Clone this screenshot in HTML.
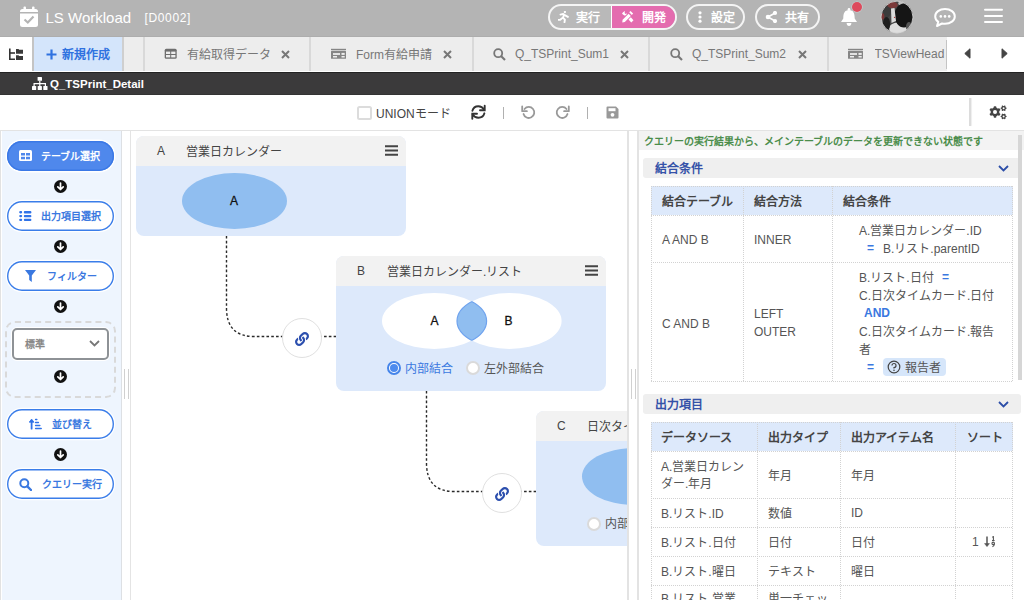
<!DOCTYPE html>
<html lang="zh-CN">
<head>
<meta charset="utf-8">
<style>
*{box-sizing:border-box;margin:0;padding:0}
html,body{width:1024px;height:600px;overflow:hidden;background:#fff;font-family:"Liberation Sans",sans-serif;color:#333}
.a{position:absolute}
.t{position:absolute;white-space:nowrap;line-height:1}
/* header */
#hdr{left:0;top:0;width:1024px;height:37px;background:#b4b4b4;box-shadow:inset 0 -1px 0 #adadad}
.pill{position:absolute;border:2px solid rgba(255,255,255,0.85);border-radius:14px;height:26px;top:4px}
/* tabs */
#tabs{left:0;top:37px;width:1024px;height:35px;background:#ededed;overflow:hidden;border-bottom:1px solid #fff}
.tab{position:absolute;top:0;height:35px;border-left:2px solid #d9d9d9}
.tabtxt{font-size:12px;color:#777}
#dark{left:0;top:72px;width:1024px;height:23px;background:#3b3a3b;border-top:1px solid #232323;border-bottom:1px solid #333}
#tool{left:0;top:95px;width:1024px;height:36px;background:#fff;border-bottom:1px solid #e3e3e3}
</style>
</head>
<body>
<!-- HEADER -->
<div id="hdr" class="a">
  <svg class="a" style="left:19px;top:6px" width="20" height="22" viewBox="0 0 20 22">
    <rect x="1" y="3" width="18" height="18" rx="2.5" fill="#fff"/>
    <rect x="4.5" y="0.5" width="2.5" height="5" rx="1" fill="#fff"/>
    <rect x="13" y="0.5" width="2.5" height="5" rx="1" fill="#fff"/>
    <rect x="1" y="6" width="18" height="1.5" fill="#b4b4b4"/>
    <path d="M5.5 13.5 L8.8 16.5 L14.5 10.5" stroke="#b4b4b4" stroke-width="2.2" fill="none"/>
  </svg>
  <div class="t" style="left:45.5px;top:9.5px;font-size:15px;color:#fff">LS Workload</div>
  <div class="t" style="left:144.5px;top:11.5px;font-size:12px;letter-spacing:0.65px;color:#fff">[D0002]</div>
  <!-- segmented -->
  <div class="a" style="left:548px;top:4px;width:129px;height:26px;border-radius:13px;overflow:hidden;border:2px solid rgba(255,255,255,0.85);background:#b9b9b9">
    <div class="a" style="left:60.5px;top:0;width:67px;height:24px;background:#e46caf;border-left:1px solid #fff"></div>
  </div>
  <svg class="a" style="left:558px;top:11px" width="11" height="12" viewBox="0 0 11 12">
    <circle cx="6.9" cy="1.1" r="1.15" fill="#fff"/>
    <path d="M2.5 3.6 L5.2 2.9 L5.9 3.4 L5.1 6.8 L6.9 8.6 L6.5 11.2 M6.8 4.2 L9.9 5.9 M4.7 6.8 L1.9 8.9 L0.6 8.9" stroke="#fff" stroke-width="1.9" fill="none" stroke-linecap="round" stroke-linejoin="round"/>
  </svg>
  <div class="t" style="left:576px;top:12px;font-size:12px;font-weight:bold;color:#fff">実行</div>
  <svg class="a" style="left:621px;top:10px" width="14" height="14" viewBox="0 0 14 14">
    <path d="M1.3 12.6 L1.6 9.8 L7.6 3.8 L9.8 6 L3.8 12 Z" fill="#fff"/>
    <path d="M8.2 2.3 L9.5 1 L12.1 3.6 L10.8 4.9 Z" fill="#fff"/>
    <path d="M2 2.3 L4 0.9 L3.6 3 L4.6 4 L6.1 3.2 L5 5.3 L3.3 5.6 L1 3.8 Z" fill="#fff"/>
    <path d="M7.5 9.6 L9.8 7.3 L12.5 10.2 L10.3 12.5 Z" fill="#fff"/>
  </svg>
  <div class="t" style="left:642px;top:12px;font-size:12px;font-weight:bold;color:#fff">開発</div>
  <div class="pill" style="left:686px;width:59px"></div>
  <svg class="a" style="left:698px;top:11px" width="4" height="12" viewBox="0 0 4 12"><circle cx="2" cy="1.8" r="1.6" fill="#fff"/><circle cx="2" cy="6" r="1.6" fill="#fff"/><circle cx="2" cy="10.2" r="1.6" fill="#fff"/></svg>
  <div class="t" style="left:711px;top:12px;font-size:12px;font-weight:bold;color:#fff">設定</div>
  <div class="pill" style="left:755px;width:65px"></div>
  <svg class="a" style="left:765px;top:11px" width="13" height="12" viewBox="0 0 13 12"><path d="M10 2 L3 6 L10 10" stroke="#fff" stroke-width="1.6" fill="none"/><circle cx="10" cy="2" r="2.1" fill="#fff"/><circle cx="3" cy="6" r="2.3" fill="#fff"/><circle cx="10" cy="10" r="2.1" fill="#fff"/></svg>
  <div class="t" style="left:785px;top:12px;font-size:12px;font-weight:bold;color:#fff">共有</div>
  <!-- bell -->
  <svg class="a" style="left:836px;top:0px" width="30" height="30" viewBox="836 0 30 30">
    <circle cx="849" cy="9.3" r="1.3" fill="#fff"/>
    <path d="M843.3 18.5 C843.3 13.5 844.5 10 849 10 C853.5 10 854.7 13.5 854.7 18.5 L857 22 H841 Z" fill="#fff"/>
    <path d="M846.6 23 H851.4 C851.4 24.9 850.3 25.9 849 25.9 C847.7 25.9 846.6 24.9 846.6 23Z" fill="#fff"/>
  </svg>
  <div class="a" style="left:851.5px;top:1.5px;width:10px;height:10px;border-radius:50%;background:#dd4a5c;box-shadow:0 0 0 0.6px #c6d3d3"></div>
  <!-- avatar -->
  <svg class="a" style="left:880px;top:0px" width="35" height="35" viewBox="880 0 35 35">
    <defs><clipPath id="av"><circle cx="897" cy="17.1" r="16"/></clipPath></defs>
    <g clip-path="url(#av)">
      <rect x="880" y="0" width="35" height="35" fill="#474747"/>
      <ellipse cx="886" cy="11" rx="5" ry="7" fill="#3b3b3b"/>
      <ellipse cx="892.5" cy="5" rx="5.2" ry="3.2" fill="#7b3a3a"/>
      <ellipse cx="882.5" cy="16.5" rx="1.9" ry="3.2" fill="#7a3636"/>
      <ellipse cx="901.5" cy="3.2" rx="3.2" ry="2.4" fill="#bdbdbd"/>
      <ellipse cx="898" cy="28.5" rx="9" ry="6" fill="#dedede"/>
      <ellipse cx="904" cy="15.5" rx="9.5" ry="12" fill="#151515"/>
      <path d="M891 8.5 L894.5 8 L896 21 L891.5 23Z" fill="#dcdcdc"/>
      <ellipse cx="886.5" cy="24" rx="3.6" ry="7" fill="#1d1d1d"/>
      <ellipse cx="909" cy="27" rx="3" ry="5" fill="#555"/>
      <circle cx="894.6" cy="17.4" r="0.7" fill="#b04040"/>
    </g>
    <circle cx="897" cy="17.1" r="16" fill="none" stroke="#d2d2d2" stroke-width="0.9"/>
  </svg>
  <!-- chat -->
  <svg class="a" style="left:933px;top:7px" width="24" height="21" viewBox="0 0 24 21">
    <path d="M12 2 C6.5 2 2.2 5.3 2.2 9.4 C2.2 11.6 3.4 13.5 5.3 14.8 L4 19 L9 16.5 C10 16.7 11 16.8 12 16.8 C17.5 16.8 21.8 13.5 21.8 9.4 C21.8 5.3 17.5 2 12 2Z" fill="none" stroke="#fff" stroke-width="2" stroke-linejoin="round"/>
    <circle cx="7.8" cy="9.4" r="1.3" fill="#fff"/><circle cx="12" cy="9.4" r="1.3" fill="#fff"/><circle cx="16.2" cy="9.4" r="1.3" fill="#fff"/>
  </svg>
  <!-- hamburger -->
  <svg class="a" style="left:983px;top:7px" width="21" height="18" viewBox="0 0 21 18"><path d="M2 2.7H19M2 9H19M2 15H19" stroke="#fff" stroke-width="2" stroke-linecap="round"/></svg>
</div>

<!-- TABS -->
<div id="tabs" class="a">
  <div class="a" style="left:0;top:0;width:32px;height:35px;background:#fff"></div>
  <svg class="a" style="left:8px;top:10px" width="16" height="14" viewBox="0 0 16 14">
    <path d="M1.8 1.5 V12.2 H7" stroke="#333" stroke-width="1.6" fill="none"/>
    <path d="M1.8 6 H7" stroke="#333" stroke-width="1.6" fill="none"/>
    <path d="M8 2 H10.5 L11.2 2.8 H15 V6.8 H8Z" fill="#3a3a3a"/>
    <path d="M8 8.2 H10.5 L11.2 9 H15 V13 H8Z" fill="#3a3a3a"/>
  </svg>
  <div class="a" style="left:32px;top:0;width:1.5px;height:35px;background:#c4c4c4"></div>
  <div class="a" style="left:33.5px;top:0;width:88.5px;height:35px;background:#d4e5fb"></div>
  <svg class="a" style="left:46px;top:48px;top:12px" width="11" height="11" viewBox="0 0 11 11"><path d="M5.5 0.5V10.5M0.5 5.5H10.5" stroke="#2f72e0" stroke-width="2.2"/></svg>
  <div class="t" style="left:62px;top:12px;font-size:12px;font-weight:bold;color:#2f72e0">新規作成</div>
  <div class="a" style="left:122px;top:0;width:2px;height:35px;background:#cfcfcf"></div>
  <div class="tab" style="left:143px;width:166px"></div>
  <div class="tab" style="left:309px;width:163px"></div>
  <div class="tab" style="left:472px;width:177px"></div>
  <div class="tab" style="left:648px;width:179px"></div>
  <div class="tab" style="left:827px;width:120px"></div>
  <!-- tab1 -->
  <svg class="a" style="left:164px;top:11px" width="14" height="12" viewBox="0 0 14 12"><rect x="0.7" y="0.7" width="12" height="10.1" rx="1.5" fill="#6e6e6e"/><g fill="#ededed"><rect x="2" y="3.6" width="4.2" height="2.4"/><rect x="7.2" y="3.6" width="4.2" height="2.4"/><rect x="2" y="7" width="4.2" height="2.4"/><rect x="7.2" y="7" width="4.2" height="2.4"/></g></svg>
  <div class="t tabtxt" style="left:187px;top:12px">有給取得データ</div>
  <svg class="a" style="left:281px;top:13px" width="9" height="9" viewBox="0 0 9 9"><path d="M1 1L8 8M8 1L1 8" stroke="#777" stroke-width="2"/></svg>
  <!-- tab2 -->
  <svg class="a" style="left:331px;top:11px" width="15" height="11" viewBox="0 0 15 11"><rect x="0" y="0.8" width="15" height="1.3" fill="#858585"/><rect x="0" y="2.8" width="15" height="8" rx="0.6" fill="#858585"/><g fill="#ededed"><rect x="2" y="5.1" width="7" height="1.8"/><rect x="10.5" y="4.9" width="3.2" height="2"/><rect x="2" y="8" width="4" height="1.5"/><rect x="10.5" y="8" width="3.2" height="1.5"/></g></svg>
  <div class="t tabtxt" style="left:356px;top:12px">Form有給申請</div>
  <svg class="a" style="left:443px;top:13px" width="9" height="9" viewBox="0 0 9 9"><path d="M1 1L8 8M8 1L1 8" stroke="#777" stroke-width="2"/></svg>
  <!-- tab3 -->
  <svg class="a" style="left:493.3px;top:10.8px" width="13" height="13" viewBox="0 0 13 13"><circle cx="5.2" cy="5.2" r="4" fill="none" stroke="#777" stroke-width="1.8"/><path d="M8 8L12 12" stroke="#777" stroke-width="2.2"/></svg>
  <div class="t tabtxt" style="left:515px;top:11px">Q_TSPrint_Sum1</div>
  <svg class="a" style="left:620px;top:13px" width="9" height="9" viewBox="0 0 9 9"><path d="M1 1L8 8M8 1L1 8" stroke="#777" stroke-width="2"/></svg>
  <!-- tab4 -->
  <svg class="a" style="left:670.3px;top:10.8px" width="13" height="13" viewBox="0 0 13 13"><circle cx="5.2" cy="5.2" r="4" fill="none" stroke="#777" stroke-width="1.8"/><path d="M8 8L12 12" stroke="#777" stroke-width="2.2"/></svg>
  <div class="t tabtxt" style="left:692px;top:11px">Q_TSPrint_Sum2</div>
  <svg class="a" style="left:798px;top:13px" width="9" height="9" viewBox="0 0 9 9"><path d="M1 1L8 8M8 1L1 8" stroke="#777" stroke-width="2"/></svg>
  <!-- tab5 -->
  <svg class="a" style="left:848px;top:11px" width="15" height="11" viewBox="0 0 15 11"><rect x="0" y="0.8" width="15" height="1.3" fill="#858585"/><rect x="0" y="2.8" width="15" height="8" rx="0.6" fill="#858585"/><g fill="#ededed"><rect x="2" y="5.1" width="7" height="1.8"/><rect x="10.5" y="4.9" width="3.2" height="2"/><rect x="2" y="8" width="4" height="1.5"/><rect x="10.5" y="8" width="3.2" height="1.5"/></g></svg>
  <div class="t tabtxt" style="left:874.5px;top:11px;width:70px;overflow:hidden">TSViewHead</div>
  <div class="a" style="left:945.5px;top:3px;width:1.5px;height:29px;background:#c4c4c4"></div>
  <div class="a" style="left:947px;top:0;width:77px;height:35px;background:#fff"></div>
  <svg class="a" style="left:963.5px;top:11px" width="7" height="11" viewBox="0 0 7 11"><path d="M6 0.8V10.2L0.8 5.5Z" fill="#444" stroke="#444" stroke-width="1" stroke-linejoin="round"/></svg>
  <svg class="a" style="left:1001px;top:11px" width="7" height="11" viewBox="0 0 7 11"><path d="M1 0.8V10.2L6.2 5.5Z" fill="#444" stroke="#444" stroke-width="1" stroke-linejoin="round"/></svg>
</div>
<div id="dark" class="a">
  <svg class="a" style="left:31.5px;top:4px" width="16" height="14" viewBox="0 0 16 14">
    <rect x="5.6" y="0" width="4.4" height="3.8" rx="0.6" fill="#fff"/>
    <rect x="0" y="9" width="4.2" height="4" rx="0.6" fill="#fff"/>
    <rect x="5.7" y="9" width="4.2" height="4" rx="0.6" fill="#fff"/>
    <rect x="11.3" y="9" width="4.2" height="4" rx="0.6" fill="#fff"/>
    <path d="M7.8 3.8V9M2.1 9V6.6H13.4V9" stroke="#fff" stroke-width="1.2" fill="none"/>
  </svg>
  <div class="t" style="left:50px;top:6px;font-size:11.5px;font-weight:bold;color:#fff">Q_TSPrint_Detail</div>
</div>
<div id="tool" class="a">
  <div class="a" style="left:357px;top:10.5px;width:14.5px;height:14.5px;border:2px solid #dcdcdc;border-radius:2.5px;background:#fff"></div>
  <div class="t" style="left:376px;top:13px;font-size:12px;color:#444">UNIONモード</div>
  <svg class="a" style="left:470px;top:9px" width="18" height="17" viewBox="0 0 18 17">
    <path d="M2.4 6.8 C3.2 3.8 5.6 2.3 8.3 2.3 C10.8 2.3 12.8 3.6 14.2 5.8" stroke="#333" stroke-width="1.9" fill="none" stroke-linecap="round"/>
    <path d="M14.7 1.8 V6.3 H10" stroke="#333" stroke-width="1.9" fill="none" stroke-linecap="round" stroke-linejoin="miter"/>
    <path d="M14.4 9.3 C13.6 12.2 11.2 13.8 8.4 13.8 C5.9 13.8 4 12.6 2.7 10.5" stroke="#333" stroke-width="1.9" fill="none" stroke-linecap="round"/>
    <path d="M2.3 14.7 V9.8 H7" stroke="#333" stroke-width="1.9" fill="none" stroke-linecap="round" stroke-linejoin="miter"/>
  </svg>
  <div class="a" style="left:502.5px;top:11.5px;width:1.2px;height:12px;background:#b0b0b0"></div>
  <svg class="a" style="left:521px;top:10px" width="15" height="15" viewBox="0 0 15 15">
    <path d="M3.5 4 A5.5 5.5 0 1 1 2.5 9" stroke="#999" stroke-width="1.8" fill="none" stroke-linecap="round"/>
    <path d="M1.2 1.5 V6.2 H5.9" stroke="#999" stroke-width="1.8" fill="none" stroke-linecap="round" stroke-linejoin="round"/>
  </svg>
  <svg class="a" style="left:555px;top:10px" width="15" height="15" viewBox="0 0 15 15">
    <path d="M11.5 4 A5.5 5.5 0 1 0 12.5 9" stroke="#999" stroke-width="1.8" fill="none" stroke-linecap="round"/>
    <path d="M13.8 1.5 V6.2 H9.1" stroke="#999" stroke-width="1.8" fill="none" stroke-linecap="round" stroke-linejoin="round"/>
  </svg>
  <div class="a" style="left:587px;top:11.5px;width:1.2px;height:12px;background:#b0b0b0"></div>
  <svg class="a" style="left:606px;top:11px" width="13" height="13" viewBox="0 0 13 13">
    <path d="M1.5 0.5 H10 L12.5 3 V11.5 A1 1 0 0 1 11.5 12.5 H1.5 A1 1 0 0 1 0.5 11.5 V1.5 A1 1 0 0 1 1.5 0.5Z" fill="#999"/>
    <rect x="2.5" y="2.2" width="7" height="3" fill="#fff"/>
    <circle cx="6.5" cy="8.8" r="1.9" fill="#fff"/>
  </svg>
  <div class="a" style="left:969px;top:3px;width:2px;height:28px;background:#dcdcdc;box-shadow:1px 0 1px #eee"></div>
  <svg class="a" style="left:984px;top:0px" width="28" height="35" viewBox="984 95 28 35"><circle cx="995" cy="112" r="4.4" fill="#444"/><rect x="993.7" y="106.2" width="2.6" height="11.6" rx="0.78" fill="#444" transform="rotate(0 995 112)"/><rect x="993.7" y="106.2" width="2.6" height="11.6" rx="0.78" fill="#444" transform="rotate(60 995 112)"/><rect x="993.7" y="106.2" width="2.6" height="11.6" rx="0.78" fill="#444" transform="rotate(120 995 112)"/><circle cx="995" cy="112" r="2.0" fill="#fff"/><circle cx="1003.6" cy="108.2" r="2.3" fill="#444"/><rect x="1002.95" y="105.2" width="1.3" height="6.0" rx="0.39" fill="#444" transform="rotate(30 1003.6 108.2)"/><rect x="1002.95" y="105.2" width="1.3" height="6.0" rx="0.39" fill="#444" transform="rotate(90 1003.6 108.2)"/><rect x="1002.95" y="105.2" width="1.3" height="6.0" rx="0.39" fill="#444" transform="rotate(150 1003.6 108.2)"/><circle cx="1003.6" cy="108.2" r="1.0" fill="#fff"/><circle cx="1003.6" cy="116.4" r="2.3" fill="#444"/><rect x="1002.95" y="113.4" width="1.3" height="6.0" rx="0.39" fill="#444" transform="rotate(30 1003.6 116.4)"/><rect x="1002.95" y="113.4" width="1.3" height="6.0" rx="0.39" fill="#444" transform="rotate(90 1003.6 116.4)"/><rect x="1002.95" y="113.4" width="1.3" height="6.0" rx="0.39" fill="#444" transform="rotate(150 1003.6 116.4)"/><circle cx="1003.6" cy="116.4" r="1.0" fill="#fff"/></svg>
</div>
<!-- SIDEBAR -->
<div class="a" style="left:0;top:131px;width:122px;height:469px;background:#eef5fe;border-left:2px solid #fff;border-right:1.5px solid #dde0e4"></div>
<div class="a" style="left:0;top:131px;width:1px;height:469px;background:#e2e2e2"></div>
<div class="a" style="left:124px;top:369px;width:1px;height:30px;background:#d0d0d0"></div>
<div class="a" style="left:127.5px;top:369px;width:1px;height:30px;background:#d0d0d0"></div>
<div class="a" style="left:130px;top:131px;width:1px;height:469px;background:#e4e4e4"></div>
<style>
.sbtn{position:absolute;left:7px;width:107px;height:30px;border-radius:15px;background:#fff;box-shadow:inset 0 0 0 1.4px #3a7de9,0 0 0 1.2px #fff}
.stxt{position:absolute;white-space:nowrap;line-height:1;font-size:10px;font-weight:bold;color:#3a78e0}
</style>
<div class="sbtn" style="top:141px;background:#4f88ec;box-shadow:inset 0 0 0 1.4px #3a78e6,0 0 0 1.5px #fff"></div>
<svg class="a" style="left:19px;top:150px" width="13" height="11" viewBox="0 0 13 11"><rect x="0" y="0" width="13" height="11" rx="1.5" fill="#fff"/><rect x="2" y="3" width="4" height="2.5" fill="#4f88ec"/><rect x="7" y="3" width="4" height="2.5" fill="#4f88ec"/><rect x="2" y="6.8" width="4" height="2.5" fill="#4f88ec"/><rect x="7" y="6.8" width="4" height="2.5" fill="#4f88ec"/></svg>
<div class="stxt" style="left:41px;top:151.5px;color:#fff">テーブル選択</div>
<svg class="a" style="left:54px;top:179.5px" width="13" height="13" viewBox="0 0 13 13"><circle cx="6.5" cy="6.5" r="6.5" fill="#111"/><path d="M6.5 3V9.5M3.8 6.8L6.5 9.5L9.2 6.8" stroke="#fff" stroke-width="1.7" fill="none" stroke-linecap="round" stroke-linejoin="round"/></svg>
<div class="sbtn" style="top:201px"></div>
<svg class="a" style="left:19px;top:211px" width="13" height="11" viewBox="0 0 13 11"><g fill="#2f72e8"><rect x="0.2" y="0.1" width="3" height="2.3" rx="1.1"/><rect x="0.2" y="3.9" width="3" height="2.3" rx="1.1"/><rect x="0.2" y="7.7" width="3" height="2.3" rx="1.1"/><rect x="4.8" y="0.1" width="7.6" height="2.3" rx="1"/><rect x="4.8" y="3.9" width="7.6" height="2.3" rx="1"/><rect x="4.8" y="7.7" width="7.6" height="2.3" rx="1"/></g></svg>
<div class="stxt" style="left:41px;top:211.5px">出力項目選択</div>
<svg class="a" style="left:54px;top:239.5px" width="13" height="13" viewBox="0 0 13 13"><circle cx="6.5" cy="6.5" r="6.5" fill="#111"/><path d="M6.5 3V9.5M3.8 6.8L6.5 9.5L9.2 6.8" stroke="#fff" stroke-width="1.7" fill="none" stroke-linecap="round" stroke-linejoin="round"/></svg>
<div class="sbtn" style="top:261px"></div>
<svg class="a" style="left:25px;top:270px" width="11" height="12" viewBox="0 0 11 12"><path d="M0 0H11L6.8 5.5V12L4.2 10V5.5Z" fill="#3a78e0"/></svg>
<div class="stxt" style="left:47px;top:271.5px">フィルター</div>
<svg class="a" style="left:54px;top:299.5px" width="13" height="13" viewBox="0 0 13 13"><circle cx="6.5" cy="6.5" r="6.5" fill="#111"/><path d="M6.5 3V9.5M3.8 6.8L6.5 9.5L9.2 6.8" stroke="#fff" stroke-width="1.7" fill="none" stroke-linecap="round" stroke-linejoin="round"/></svg>
<div class="a" style="left:5px;top:321px;width:111px;height:77px;border:2px dashed #d9d9d9;border-radius:10px"></div>
<div class="a" style="left:12px;top:328px;width:97px;height:32px;border:2px solid #8e9296;border-radius:5px;background:#fff;box-shadow:0 0 0 1px #fff"></div>
<div class="t" style="left:25px;top:339.5px;font-size:10px;font-weight:bold;color:#888">標準</div>
<svg class="a" style="left:89px;top:340px" width="11" height="7" viewBox="0 0 11 7"><path d="M1 1L5.5 5.5L10 1" stroke="#777" stroke-width="1.8" fill="none"/></svg>
<svg class="a" style="left:54px;top:369.5px" width="13" height="13" viewBox="0 0 13 13"><circle cx="6.5" cy="6.5" r="6.5" fill="#111"/><path d="M6.5 3V9.5M3.8 6.8L6.5 9.5L9.2 6.8" stroke="#fff" stroke-width="1.7" fill="none" stroke-linecap="round" stroke-linejoin="round"/></svg>
<div class="sbtn" style="top:409px"></div>
<svg class="a" style="left:29px;top:418px" width="13" height="12" viewBox="0 0 13 12"><path d="M2.6 3V10.7" stroke="#2f72e8" stroke-width="1.8" stroke-linecap="round"/><path d="M0.2 4.2L2.6 1.1L5 4.2Z" fill="#2f72e8" stroke="#2f72e8" stroke-width="0.8" stroke-linejoin="round"/><path d="M6.6 1.4H7.8M6.6 4.4H9.4M6.6 7.4H10.8M6.6 10.5H12.2" stroke="#2f72e8" stroke-width="1.5" stroke-linecap="round"/></svg>
<div class="stxt" style="left:52px;top:419.5px">並び替え</div>
<svg class="a" style="left:54px;top:447.5px" width="13" height="13" viewBox="0 0 13 13"><circle cx="6.5" cy="6.5" r="6.5" fill="#111"/><path d="M6.5 3V9.5M3.8 6.8L6.5 9.5L9.2 6.8" stroke="#fff" stroke-width="1.7" fill="none" stroke-linecap="round" stroke-linejoin="round"/></svg>
<div class="sbtn" style="top:469px"></div>
<svg class="a" style="left:19px;top:478px" width="13" height="13" viewBox="0 0 13 13"><circle cx="5.3" cy="5.3" r="4" fill="none" stroke="#3a78e0" stroke-width="2"/><path d="M8.3 8.3L12 12" stroke="#3a78e0" stroke-width="2.4" stroke-linecap="round"/></svg>
<div class="stxt" style="left:42px;top:479.5px">クエリー実行</div>
<!-- CANVAS -->
<style>
.card{position:absolute;border-radius:8px;overflow:hidden;background:#dde9fb}
.chd{position:absolute;left:0;top:0;right:0;height:28px;background:#f2f2f2}
.ctxt{position:absolute;white-space:nowrap;line-height:1;font-size:12px;color:#444}
</style>
<svg class="a" style="left:131px;top:131px" width="497" height="469" viewBox="131 131 497 469">
  <path d="M226.5 236 V308 Q226.5 336.5 254 336.5 H336" stroke="#2a2a2a" stroke-width="1.4" stroke-dasharray="2.6 2.2" fill="none"/>
  <path d="M426.5 391 V463 Q426.5 491.5 454 491.5 H536" stroke="#2a2a2a" stroke-width="1.4" stroke-dasharray="2.6 2.2" fill="none"/>
</svg>
<div class="card" style="left:136px;top:136px;width:270px;height:100px">
  <div class="chd" style="height:29.5px"></div>
  <div class="a" style="left:46px;top:37px;width:104.5px;height:56px;border-radius:50%;background:#90bef0"></div>
</div>
<div class="ctxt" style="left:157px;top:145px">A</div>
<div class="ctxt" style="left:186px;top:146px">営業日カレンダー</div>
<svg class="a" style="left:385px;top:145px" width="13" height="11" viewBox="0 0 13 11"><path d="M0 1.2H13M0 5.5H13M0 9.8H13" stroke="#444" stroke-width="2"/></svg>
<div class="t" style="left:230px;top:195px;font-size:12px;color:#111;-webkit-text-stroke:0.3px #111">A</div>

<div class="card" style="left:336px;top:256px;width:270px;height:135px">
  <div class="chd" style="height:30px"></div>
  <svg class="a" style="left:0;top:0" width="270" height="135" viewBox="336 256 270 135">
    <defs><clipPath id="cl"><ellipse cx="434.3" cy="321" rx="52.3" ry="28"/></clipPath></defs>
    <ellipse cx="434.3" cy="321" rx="52.3" ry="28" fill="#fff"/>
    <ellipse cx="509.3" cy="321" rx="52.3" ry="28" fill="#fff"/>
    <defs><clipPath id="cr"><ellipse cx="509.3" cy="321" rx="52.3" ry="28"/></clipPath></defs>
    <ellipse cx="509.3" cy="321" rx="52.3" ry="28" fill="#90bef0" stroke="#6fa3ee" stroke-width="1.2" clip-path="url(#cl)"/>
    <ellipse cx="434.3" cy="321" rx="52.3" ry="28" fill="none" stroke="#6fa3ee" stroke-width="1.2" clip-path="url(#cr)"/>
  </svg>
</div>
<div class="ctxt" style="left:357px;top:265px">B</div>
<div class="ctxt" style="left:387px;top:266px">営業日カレンダー.リスト</div>
<svg class="a" style="left:585px;top:265px" width="13" height="11" viewBox="0 0 13 11"><path d="M0 1.2H13M0 5.5H13M0 9.8H13" stroke="#444" stroke-width="2"/></svg>
<div class="t" style="left:430.5px;top:315px;font-size:12px;color:#111;-webkit-text-stroke:0.3px #111">A</div>
<div class="t" style="left:504.5px;top:315px;font-size:12px;color:#111;-webkit-text-stroke:0.3px #111">B</div>
<div class="a" style="left:387px;top:361px;width:14px;height:14px;border-radius:50%;background:#fff;border:2px solid #4585ea"></div>
<div class="a" style="left:390px;top:364px;width:8px;height:8px;border-radius:50%;background:#4d8bee"></div>
<div class="t" style="left:405px;top:363px;font-size:12px;color:#3a78e0">内部結合</div>
<div class="a" style="left:466px;top:361px;width:14px;height:14px;border-radius:50%;background:#fff;border:2px solid #dadada"></div>
<div class="t" style="left:484px;top:363px;font-size:12px;color:#555">左外部結合</div>

<div class="a" style="left:536px;top:411px;width:92px;height:135px;overflow:hidden">
<div class="card" style="left:0;top:0;width:270px;height:135px">
  <div class="chd" style="height:30px"></div>
  <div class="a" style="left:46px;top:37px;width:104px;height:57px;border-radius:50%;background:#90bef0"></div>
</div>
<div class="ctxt" style="left:21px;top:9px">C</div>
<div class="ctxt" style="left:51px;top:10px">日次タイムカード</div>
<div class="a" style="left:51px;top:105.5px;width:14px;height:14px;border-radius:50%;background:#fff;border:2px solid #dadada"></div>
<div class="t" style="left:69px;top:107px;font-size:12px;color:#555">内部結合</div>
</div>
<div class="a" style="left:281.5px;top:318px;width:40px;height:40px;border-radius:50%;background:#fff;border:1.4px solid #e0e0e0"></div>
<svg class="a" style="left:294.5px;top:331.5px" width="14" height="14" viewBox="0 0 512 512"><path fill="#2c4fae" d="M326.612 185.391c59.747 59.809 58.927 155.698.36 214.59-.11.12-.24.25-.36.37l-67.2 67.2c-59.27 59.27-155.699 59.262-214.96 0-59.27-59.26-59.27-155.7 0-214.96l37.106-37.106c9.84-9.84 26.786-3.3 27.294 10.606.648 17.722 3.826 35.527 9.69 52.721 1.986 5.822.567 12.262-3.783 16.612l-13.087 13.087c-28.026 28.026-28.905 73.66-1.155 101.96 28.024 28.579 74.086 28.749 102.325.51l67.2-67.19c28.191-28.191 28.073-73.757 0-101.83-3.701-3.694-7.429-6.564-10.341-8.569a16.037 16.037 0 0 1-6.947-12.606c-.396-10.567 3.348-21.456 11.698-29.806l21.054-21.055c5.521-5.521 14.182-6.199 20.584-1.731a152.482 152.482 0 0 1 20.522 17.197zM467.547 44.449c-59.261-59.262-155.69-59.27-214.96 0l-67.2 67.2c-.12.12-.25.25-.36.37-58.566 58.892-59.387 154.781.36 214.59a152.454 152.454 0 0 0 20.521 17.196c6.402 4.468 15.064 3.789 20.584-1.731l21.054-21.055c8.35-8.35 12.094-19.239 11.698-29.806a16.037 16.037 0 0 0-6.947-12.606c-2.912-2.005-6.64-4.875-10.341-8.569-28.073-28.073-28.191-73.639 0-101.83l67.2-67.19c28.239-28.239 74.3-28.069 102.325.51 27.75 28.3 26.872 73.934-1.155 101.96l-13.087 13.087c-4.35 4.35-5.769 10.79-3.783 16.612 5.864 17.194 9.042 34.999 9.69 52.721.509 13.906 17.454 20.446 27.294 10.606l37.106-37.106c59.271-59.259 59.271-155.699.001-214.959z"/></svg>
<div class="a" style="left:481.5px;top:473px;width:40px;height:40px;border-radius:50%;background:#fff;border:1.4px solid #e0e0e0"></div>
<svg class="a" style="left:494.5px;top:486.5px" width="14" height="14" viewBox="0 0 512 512"><path fill="#2c4fae" d="M326.612 185.391c59.747 59.809 58.927 155.698.36 214.59-.11.12-.24.25-.36.37l-67.2 67.2c-59.27 59.27-155.699 59.262-214.96 0-59.27-59.26-59.27-155.7 0-214.96l37.106-37.106c9.84-9.84 26.786-3.3 27.294 10.606.648 17.722 3.826 35.527 9.69 52.721 1.986 5.822.567 12.262-3.783 16.612l-13.087 13.087c-28.026 28.026-28.905 73.66-1.155 101.96 28.024 28.579 74.086 28.749 102.325.51l67.2-67.19c28.191-28.191 28.073-73.757 0-101.83-3.701-3.694-7.429-6.564-10.341-8.569a16.037 16.037 0 0 1-6.947-12.606c-.396-10.567 3.348-21.456 11.698-29.806l21.054-21.055c5.521-5.521 14.182-6.199 20.584-1.731a152.482 152.482 0 0 1 20.522 17.197zM467.547 44.449c-59.261-59.262-155.69-59.27-214.96 0l-67.2 67.2c-.12.12-.25.25-.36.37-58.566 58.892-59.387 154.781.36 214.59a152.454 152.454 0 0 0 20.521 17.196c6.402 4.468 15.064 3.789 20.584-1.731l21.054-21.055c8.35-8.35 12.094-19.239 11.698-29.806a16.037 16.037 0 0 0-6.947-12.606c-2.912-2.005-6.64-4.875-10.341-8.569-28.073-28.073-28.191-73.639 0-101.83l67.2-67.19c28.239-28.239 74.3-28.069 102.325.51 27.75 28.3 26.872 73.934-1.155 101.96l-13.087 13.087c-4.35 4.35-5.769 10.79-3.783 16.612 5.864 17.194 9.042 34.999 9.69 52.721.509 13.906 17.454 20.446 27.294 10.606l37.106-37.106c59.271-59.259 59.271-155.699.001-214.959z"/></svg>
<!-- splitter -->
<div class="a" style="left:627px;top:131px;width:1.5px;height:469px;background:#e3e3e3"></div>
<div class="a" style="left:631px;top:369px;width:1px;height:30px;background:#d0d0d0"></div>
<div class="a" style="left:634.5px;top:369px;width:1px;height:30px;background:#d0d0d0"></div>
<div class="a" style="left:637px;top:131px;width:1.5px;height:469px;background:#e3e3e3"></div>
<!-- RIGHT PANEL -->
<style>
.rt{position:absolute;white-space:nowrap;line-height:1;font-size:12px;color:#555}
.rh{position:absolute;white-space:nowrap;line-height:1;font-size:12px;font-weight:bold;color:#444}
.bl{position:absolute;background-image:linear-gradient(to right,#d2d2d2 50%,transparent 50%);background-size:2px 1px;height:1px}
.bv{position:absolute;background-image:linear-gradient(to bottom,#d2d2d2 50%,transparent 50%);background-size:1px 2px;width:1px}
</style>
<div class="a" style="left:638.5px;top:131px;width:385.5px;height:19px;background:#f3f3f3"></div>
<div class="t" style="left:643.5px;top:136.5px;font-size:10px;font-weight:bold;color:#4b8d4b">クエリーの実行結果から、メインテーブルのデータを更新できない状態です</div>
<div class="a" style="left:643px;top:158px;width:378px;height:19.5px;background:#efefef;border-radius:3px"></div>
<div class="t" style="left:655px;top:163px;font-size:12px;font-weight:bold;color:#3552a8">結合条件</div>
<svg class="a" style="left:998px;top:165px" width="11" height="7" viewBox="0 0 11 7"><path d="M1 1L5.5 5.5L10 1" stroke="#2c4ea8" stroke-width="1.8" fill="none"/></svg>
<!-- table 1 -->
<div class="a" style="left:651px;top:186px;width:362px;height:29px;background:#dde9fb"></div>
<div class="bl" style="left:651px;top:186px;width:362px"></div>
<div class="bl" style="left:651px;top:215px;width:362px"></div>
<div class="bl" style="left:651px;top:262px;width:362px"></div>
<div class="bl" style="left:651px;top:381px;width:362px"></div>
<div class="bv" style="left:651px;top:186px;height:196px"></div>
<div class="bv" style="left:743px;top:186px;height:196px"></div>
<div class="bv" style="left:832px;top:186px;height:196px"></div>
<div class="bv" style="left:1012px;top:186px;height:196px"></div>
<div class="rh" style="left:662px;top:195.5px">結合テーブル</div>
<div class="rh" style="left:754px;top:195.5px">結合方法</div>
<div class="rh" style="left:843px;top:195.5px">結合条件</div>
<div class="rt" style="left:662px;top:234px">A AND B</div>
<div class="rt" style="left:754px;top:234px">INNER</div>
<div class="rt" style="left:859px;top:225px">A.営業日カレンダー.ID</div>
<div class="rt" style="left:867px;top:242px;color:#3a78e0;font-weight:bold">=</div>
<div class="rt" style="left:883px;top:243px">B.リスト.parentID</div>
<div class="rt" style="left:662px;top:318px">C AND B</div>
<div class="rt" style="left:754px;top:308px">LEFT</div>
<div class="rt" style="left:754px;top:326px">OUTER</div>
<div class="rt" style="left:859px;top:272px">B.リスト.日付</div>
<div class="rt" style="left:942px;top:271px;color:#3a78e0;font-weight:bold">=</div>
<div class="rt" style="left:859px;top:290px">C.日次タイムカード.日付</div>
<div class="rt" style="left:864px;top:307px;color:#3a78e0;font-weight:bold">AND</div>
<div class="rt" style="left:859px;top:326px">C.日次タイムカード.報告</div>
<div class="rt" style="left:859px;top:344px">者</div>
<div class="rt" style="left:867px;top:361px;color:#3a78e0;font-weight:bold">=</div>
<div class="a" style="left:883px;top:358px;width:63px;height:18px;background:#d6e6fa;border-radius:4px"></div>
<svg class="a" style="left:887px;top:360px" width="14" height="14" viewBox="0 0 14 14"><circle cx="7" cy="7" r="5.8" fill="none" stroke="#444" stroke-width="1.2"/><path d="M5 5.5 A2 2 0 1 1 7 7.5 V8.5" fill="none" stroke="#444" stroke-width="1.2"/><circle cx="7" cy="10.3" r="0.8" fill="#444"/></svg>
<div class="rt" style="left:905px;top:362px">報告者</div>
<div class="a" style="left:1018px;top:135px;width:3.5px;height:245px;background:#d6d6d6"></div>

<div class="a" style="left:643px;top:394px;width:378px;height:19.5px;background:#efefef;border-radius:3px"></div>
<div class="t" style="left:655px;top:399px;font-size:12px;font-weight:bold;color:#3552a8">出力項目</div>
<svg class="a" style="left:998px;top:401px" width="11" height="7" viewBox="0 0 11 7"><path d="M1 1L5.5 5.5L10 1" stroke="#2c4ea8" stroke-width="1.8" fill="none"/></svg>
<!-- table 2 -->
<div class="a" style="left:651px;top:422px;width:362px;height:29px;background:#dde9fb"></div>
<div class="bl" style="left:651px;top:422px;width:362px"></div>
<div class="bl" style="left:651px;top:451px;width:362px"></div>
<div class="bl" style="left:651px;top:498px;width:362px"></div>
<div class="bl" style="left:651px;top:527px;width:362px"></div>
<div class="bl" style="left:651px;top:556px;width:362px"></div>
<div class="bl" style="left:651px;top:585px;width:362px"></div>
<div class="bv" style="left:651px;top:422px;height:178px"></div>
<div class="bv" style="left:757px;top:422px;height:178px"></div>
<div class="bv" style="left:840px;top:422px;height:178px"></div>
<div class="bv" style="left:955px;top:422px;height:178px"></div>
<div class="bv" style="left:1012px;top:422px;height:178px"></div>
<div class="rh" style="left:661px;top:432px">データソース</div>
<div class="rh" style="left:768px;top:432px">出力タイプ</div>
<div class="rh" style="left:851px;top:432px">出力アイテム名</div>
<div class="rh" style="left:967px;top:432px">ソート</div>
<div class="rt" style="left:661px;top:461px">A.営業日カレン</div>
<div class="rt" style="left:661px;top:478px">ダー.年月</div>
<div class="rt" style="left:768px;top:470px">年月</div>
<div class="rt" style="left:851px;top:470px">年月</div>
<div class="rt" style="left:661px;top:508px">B.リスト.ID</div>
<div class="rt" style="left:768px;top:508px">数値</div>
<div class="rt" style="left:851px;top:507px">ID</div>
<div class="rt" style="left:661px;top:537px">B.リスト.日付</div>
<div class="rt" style="left:768px;top:537px">日付</div>
<div class="rt" style="left:851px;top:537px">日付</div>
<div class="rt" style="left:972px;top:536px">1</div>
<svg class="a" style="left:984px;top:536px" width="12" height="12" viewBox="0 0 12 12"><path d="M3 0.6V9.5" stroke="#555" stroke-width="1.5"/><path d="M0.6 7.6L3 10.6L5.4 7.6Z" fill="#555" stroke="#555" stroke-width="0.6" stroke-linejoin="round"/><path d="M8.2 1.3L9.4 0.7V4.3M8 4.5H10.6" stroke="#555" stroke-width="1.1" fill="none"/><circle cx="9.2" cy="7.4" r="1.25" fill="none" stroke="#555" stroke-width="1.1"/><path d="M10.4 7.6C10.3 9.3 9.6 10.4 8.4 10.8" stroke="#555" stroke-width="1.1" fill="none"/></svg>
<div class="rt" style="left:661px;top:566px">B.リスト.曜日</div>
<div class="rt" style="left:768px;top:566px">テキスト</div>
<div class="rt" style="left:851px;top:566px">曜日</div>
<div class="rt" style="left:661px;top:593px">B.リスト.営業</div>
<div class="rt" style="left:768px;top:593px">単一チェッ</div>
</body>
</html>
